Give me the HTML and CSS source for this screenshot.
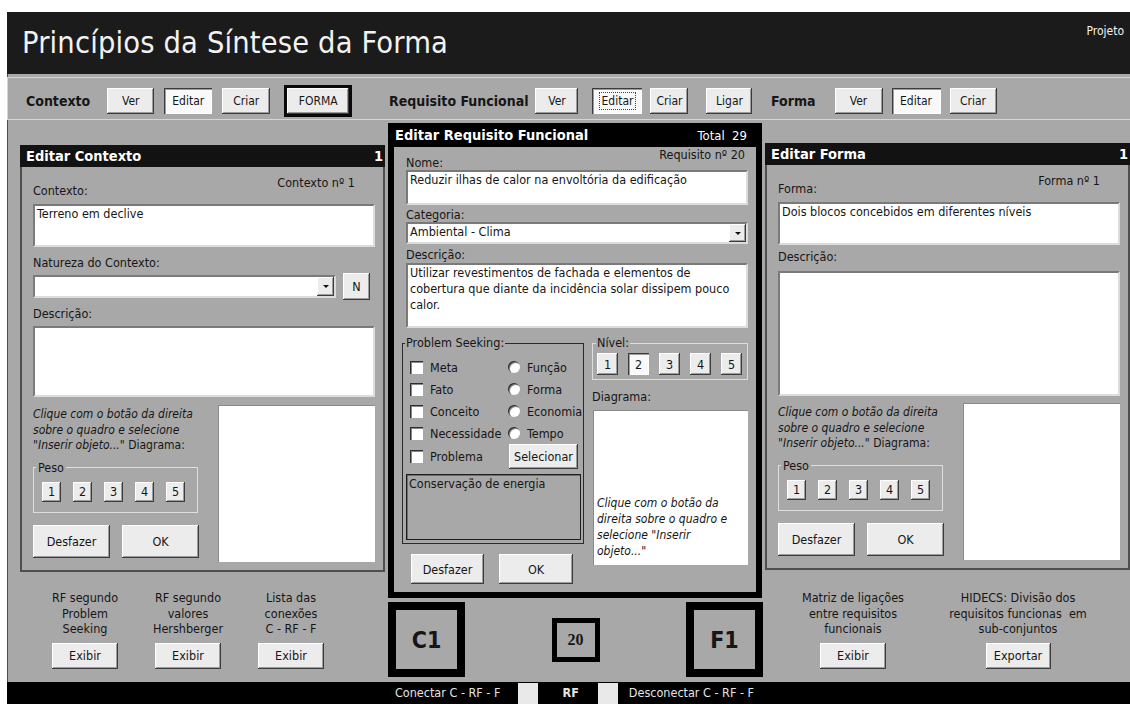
FILE: index.html
```html
<!DOCTYPE html>
<html lang="pt-BR">
<head>
<meta charset="utf-8">
<title>Princípios da Síntese da Forma</title>
<link rel="stylesheet" href="styles.css">
</head>
<body>
<div class="app">
  <header class="titlebar">
    <h1>Princípios da Síntese da Forma</h1>
    <span class="projeto">Projeto</span>
  </header>

  <div class="main">
    <nav class="toolbar">
      <div class="tb-group tb-ctx">
        <span class="tb-label">Contexto</span>
        <button class="btn tb-btn w47 ml17">Ver</button>
        <button class="btn tb-btn down w48 ml10">Editar</button>
        <button class="btn tb-btn w48 ml10">Criar</button>
        <span class="forma-ring ml14"><button class="btn tb-btn w62">FORMA</button></span>
      </div>
      <div class="tb-group tb-rf">
        <span class="tb-label">Requisito Funcional</span>
        <button class="btn tb-btn w43 ml7">Ver</button>
        <button class="btn tb-btn down w50 ml14"><span class="focus">Editar</span></button>
        <button class="btn tb-btn w38 ml8">Criar</button>
        <button class="btn tb-btn w46 ml18">Ligar</button>
      </div>
      <div class="tb-group tb-frm">
        <span class="tb-label">Forma</span>
        <button class="btn tb-btn w48 ml19">Ver</button>
        <button class="btn tb-btn down w49 ml9">Editar</button>
        <button class="btn tb-btn w47 ml9">Criar</button>
      </div>
    </nav>

    <div class="columns">
      <!-- Contexto -->
      <section class="col col-left">
        <div class="panel-side">
          <div class="panel-head"><span>Editar Contexto</span><span>1</span></div>
          <div class="panel-body">
            <div class="field-head">
              <span class="lbl">Contexto:</span>
              <span class="lbl counter">Contexto nº 1</span>
            </div>
            <div class="textbox tb-name">Terreno em declive</div>
            <div class="lbl gap8">Natureza do Contexto:</div>
            <div class="combo-row">
              <div class="combo combo-ctx"><span class="combo-val"></span><span class="drop"><i></i></span></div>
              <button class="btn btn-n">N</button>
            </div>
            <div class="lbl gap8">Descrição:</div>
            <div class="textbox tb-desc-ctx"></div>
            <div class="lower">
              <div class="lower-left">
                <p class="note">Clique com o botão da direita<br>sobre o quadro e selecione<br>"Inserir objeto..." <span class="plain">Diagrama:</span></p>
                <fieldset class="peso">
                  <legend>Peso</legend>
                  <div class="num-row">
                    <button class="btn num">1</button><button class="btn num">2</button><button class="btn num">3</button><button class="btn num">4</button><button class="btn num">5</button>
                  </div>
                </fieldset>
                <div class="actions">
                  <button class="btn act">Desfazer</button>
                  <button class="btn act">OK</button>
                </div>
              </div>
              <div class="diagram"></div>
            </div>
          </div>
        </div>
        <div class="links links-left">
          <div class="link"><p>RF segundo<br>Problem<br>Seeking</p><button class="btn go">Exibir</button></div>
          <div class="link"><p>RF segundo<br>valores<br>Hershberger</p><button class="btn go">Exibir</button></div>
          <div class="link"><p>Lista das<br>conexões<br>C - RF - F</p><button class="btn go">Exibir</button></div>
        </div>
      </section>

      <!-- Requisito Funcional -->
      <section class="col col-center">
        <div class="panel-center">
          <div class="center-head"><span>Editar Requisito Funcional</span><span class="total">Total&nbsp; 29</span></div>
          <div class="center-body">
            <div class="field-head rf-head fld">
              <span class="lbl">Nome:</span>
              <span class="lbl counter">Requisito nº 20</span>
            </div>
            <div class="textbox fld tb-rf-name">Reduzir ilhas de calor na envoltória da edificação</div>
            <div class="lbl lbl14 fld mt3">Categoria:</div>
            <div class="combo fld combo-cat"><span class="combo-val">Ambiental - Clima</span><span class="drop"><i></i></span></div>
            <div class="lbl lbl14 fld mt4">Descrição:</div>
            <div class="textbox fld tb-rf-desc">Utilizar revestimentos de fachada e elementos de cobertura que diante da incidência solar dissipem pouco calor.</div>

            <div class="rf-lower">
              <div class="rf-left">
                <fieldset class="seeking">
                  <legend>Problem Seeking:</legend>
                  <div class="opt-grid">
                    <label class="opt"><span class="chk"></span>Meta</label>
                    <label class="opt"><span class="rad"></span>Função</label>
                    <label class="opt"><span class="chk"></span>Fato</label>
                    <label class="opt"><span class="rad"></span>Forma</label>
                    <label class="opt"><span class="chk"></span>Conceito</label>
                    <label class="opt"><span class="rad"></span>Economia</label>
                    <label class="opt"><span class="chk"></span>Necessidade</label>
                    <label class="opt"><span class="rad"></span>Tempo</label>
                    <label class="opt opt-last"><span class="chk"></span>Problema</label>
                    <div class="opt opt-last"><button class="btn sel">Selecionar</button></div>
                  </div>
                  <div class="result">Conservação de energia</div>
                </fieldset>
                <div class="actions rf-actions">
                  <button class="btn act-rf w73">Desfazer</button>
                  <button class="btn act-rf w74">OK</button>
                </div>
              </div>
              <div class="rf-right">
                <fieldset class="nivel">
                  <legend>Nível:</legend>
                  <div class="num-row nivel-row">
                    <button class="btn num2">1</button><button class="btn num2 down">2</button><button class="btn num2">3</button><button class="btn num2">4</button><button class="btn num2">5</button>
                  </div>
                </fieldset>
                <div class="lbl lbl14 diag-lbl">Diagrama:</div>
                <div class="diagram rf-diagram"><p>Clique com o botão da direita sobre o quadro e selecione "Inserir objeto..."</p></div>
              </div>
            </div>
          </div>
        </div>
        <div class="chain">
          <div class="node">C1</div>
          <div class="node-mid">20</div>
          <div class="node">F1</div>
        </div>
      </section>

      <!-- Forma -->
      <section class="col col-right">
        <div class="panel-side">
          <div class="panel-head"><span>Editar Forma</span><span>1</span></div>
          <div class="panel-body">
            <div class="field-head">
              <span class="lbl">Forma:</span>
              <span class="lbl counter">Forma nº 1</span>
            </div>
            <div class="textbox tb-name">Dois blocos concebidos em diferentes níveis</div>
            <div class="lbl mt4">Descrição:</div>
            <div class="textbox tb-desc-frm"></div>
            <div class="lower lower-frm">
              <div class="lower-left">
                <p class="note">Clique com o botão da direita<br>sobre o quadro e selecione<br>"Inserir objeto..." <span class="plain">Diagrama:</span></p>
                <fieldset class="peso">
                  <legend>Peso</legend>
                  <div class="num-row">
                    <button class="btn num">1</button><button class="btn num">2</button><button class="btn num">3</button><button class="btn num">4</button><button class="btn num">5</button>
                  </div>
                </fieldset>
                <div class="actions">
                  <button class="btn act">Desfazer</button>
                  <button class="btn act">OK</button>
                </div>
              </div>
              <div class="diagram"></div>
            </div>
          </div>
        </div>
        <div class="links links-right">
          <div class="link"><p>Matriz de ligações<br>entre requisitos<br>funcionais</p><button class="btn go">Exibir</button></div>
          <div class="link"><p>HIDECS: Divisão dos<br>requisitos funcionas&nbsp; em<br>sub-conjuntos</p><button class="btn go w65">Exportar</button></div>
        </div>
      </section>
    </div>
  </div>

  <footer class="statusbar">
    <span class="sb-text">Conectar C - RF - F</span>
    <span class="sb-box box-a"></span>
    <span class="sb-text sb-rf">RF</span>
    <span class="sb-box box-b"></span>
    <span class="sb-text sb-dis">Desconectar C - RF - F</span>
  </footer>
</div>
</body>
</html>
```

FILE: styles.css
```css
* { box-sizing: border-box; }

body {
  margin: 0;
  background: #fff;
  font-family: "DejaVu Sans Condensed", "DejaVu Sans", sans-serif;
  font-size: 12.5px;
  color: #161616;
}

p { margin: 0; }

.app {
  margin: 12px 0 0 7px;
  width: 1123px;
  height: 692px;
  display: flex;
  flex-direction: column;
  overflow: hidden;
}

/* ---------- title bar ---------- */
.titlebar {
  height: 62px;
  flex: none;
  background: #1b1b1b;
  color: #f2f2f2;
  display: flex;
  justify-content: space-between;
  align-items: flex-start;
  padding: 0 6px 0 15px;
}
.titlebar h1 {
  margin: 13px 0 0;
  font-weight: normal;
  font-size: 30.5px;
  line-height: 36px;
  letter-spacing: 0.15px;
}
.projeto { margin-top: 12px; font-size: 12px; line-height: 15px; }

/* ---------- main gray area ---------- */
.main {
  flex: 1;
  background: #a8a8a8;
  box-shadow: inset 1px 0 #4d4d4d;
  display: flex;
  flex-direction: column;
}

/* ---------- buttons ---------- */
.btn {
  font: inherit;
  color: #161616;
  background: #ececec;
  border: none;
  padding: 0;
  margin: 0;
  display: inline-flex;
  align-items: center;
  justify-content: center;
  box-shadow: inset -1px -1px #3c3c3c, inset 1px 1px #ffffff, inset -2px -2px #9c9c9c;
}
.btn.down {
  background: #f9f9f9;
  box-shadow: inset 1px 1px #3c3c3c, inset 2px 2px #9c9c9c, inset -1px -1px #ffffff;
}
.btn .focus { outline: 1px dotted #444; outline-offset: 1px; padding: 0 1px; }

/* ---------- toolbar ---------- */
.toolbar {
  margin-top: 3px;
  height: 43px;
  flex: none;
  border-top: 1px solid #d6d6d6;
  border-bottom: 1px solid #d6d6d6;
  box-shadow: inset 1px 0 #d6d6d6;
  display: grid;
  grid-template-columns: 381px 375px 367px;
  align-items: center;
  padding-top: 4px;
}
.tb-group { display: flex; align-items: center; }
.tb-ctx { padding-left: 19px; }
.tb-rf { padding-left: 1px; }
.tb-frm { padding-left: 8px; }
.tb-label { font-weight: bold; font-size: 14px; }
.tb-btn { height: 26px; font-size: 12px; }
.forma-ring { display: inline-flex; border: 3px solid #0a0a0a; }

.w38 { width: 38px; } .w43 { width: 43px; } .w46 { width: 46px; } .w47 { width: 47px; }
.w48 { width: 48px; } .w49 { width: 49px; } .w50 { width: 50px; } .w62 { width: 62px; }
.w65 { width: 65px; } .w73 { width: 73px; } .w74 { width: 74px; }
.ml7 { margin-left: 7px; } .ml8 { margin-left: 8px; } .ml9 { margin-left: 9px; }
.ml10 { margin-left: 10px; } .ml14 { margin-left: 14px; } .ml17 { margin-left: 17px; }
.ml18 { margin-left: 18px; } .ml19 { margin-left: 19px; }

/* ---------- columns ---------- */
.columns {
  flex: 1;
  display: grid;
  grid-template-columns: 381px 375px 367px;
}
.col { display: flex; flex-direction: column; }

/* ---------- side panels (Contexto / Forma) ---------- */
.panel-side {
  width: 365px;
  height: 427px;
  display: flex;
  flex-direction: column;
}
.col-left .panel-side { margin: 25px 0 0 13px; }
.col-right .panel-side { margin: 23px 0 0 2px; }

.panel-head {
  height: 22px;
  flex: none;
  background: #121212;
  color: #fff;
  display: flex;
  justify-content: space-between;
  align-items: center;
  padding: 0 2px 0 6px;
  font-weight: bold;
  font-size: 14.5px;
}
.panel-body {
  flex: 1;
  border: 2px solid #4f4f4f;
  border-top: 0;
  padding: 6px 8px 0 11px;
}

.lbl { line-height: 15px; }
.lbl14 { line-height: 14px; }
.gap8 { margin-top: 8px; }
.mt3 { margin-top: 3px; }
.mt4 { margin-top: 4px; }

.field-head {
  height: 25px;
  display: flex;
  justify-content: space-between;
  align-items: flex-end;
}
.field-head .counter { align-self: flex-start; margin-top: 2px; padding-right: 20px; }

.textbox {
  background: #fff;
  border: 2px solid;
  border-color: #7a7a7a #dcdcdc #dcdcdc #7a7a7a;
  padding: 0 2px;
  line-height: 15px;
}
.tb-name { height: 43px; margin-top: 6px; }
.tb-desc-ctx { height: 71px; margin-top: 5px; }
.tb-desc-frm { height: 125px; margin-top: 7px; }

.combo-row { display: flex; align-items: center; margin-top: 5px; height: 23px; }
.combo {
  display: flex;
  align-items: stretch;
  background: #fff;
  border: 2px solid;
  border-color: #7a7a7a #dcdcdc #dcdcdc #7a7a7a;
}
.combo-ctx { width: 303px; height: 23px; }
.combo-val { flex: 1; padding: 0 2px; line-height: 17px; }
.drop {
  width: 17px;
  background: #ececec;
  display: flex;
  align-items: center;
  justify-content: center;
  box-shadow: inset -1px -1px #3c3c3c, inset 1px 1px #ffffff, inset -2px -2px #9c9c9c;
}
.drop i {
  display: block;
  border-left: 3px solid transparent;
  border-right: 3px solid transparent;
  border-top: 3px solid #111;
}
.btn-n { width: 27px; height: 27px; margin-left: 7px; }

.lower {
  margin-top: 8px;
  display: grid;
  grid-template-columns: 170px 157px;
  column-gap: 15px;
}
.lower-frm { margin-top: 7px; }
.lower-left { display: flex; flex-direction: column; }
.note { margin-top: 2px; font-style: italic; line-height: 15.5px; white-space: nowrap; font-size: 12px; }
.note .plain { font-style: normal; }
.diagram {
  height: 157px;
  background: #fff;
  border-top: 1px solid #8a8a8a;
  border-left: 1px solid #8a8a8a;
}

fieldset { margin: 0; min-inline-size: 0; }
legend { padding: 0 2px; line-height: 14px; }

.peso {
  width: 165px;
  margin-top: 7px;
  border: 1px solid #dedede;
  padding: 7px 0 10px 8px;
}
.peso legend { margin-left: -6px; }
.num-row { display: flex; gap: 12px; }
.num { width: 19px; height: 20px; }

.actions { display: flex; gap: 12px; margin-top: 12px; }
.act { width: 77px; height: 33px; }

/* ---------- links below the side panels ---------- */
.links { display: grid; text-align: center; }
.links p { line-height: 15.5px; }
.links .go { width: 66px; height: 26px; margin-top: 6px; }
.links .go.w65 { width: 65px; }
.links-left {
  margin-top: 18px;
  padding-left: 28px;
  grid-template-columns: 100px 100px 100px;
  column-gap: 3px;
}
.links-right {
  margin-top: 20px;
  padding-left: 25px;
  grid-template-columns: 130px 170px;
  column-gap: 15px;
}
.link { display: flex; flex-direction: column; align-items: center; white-space: nowrap; }

/* ---------- center panel (Requisito Funcional) ---------- */
.panel-center {
  margin-top: 3px;
  width: 374px;
  height: 475px;
  background: #000;
  padding: 0 6px 6px;
  display: flex;
  flex-direction: column;
}
.center-head {
  height: 24px;
  flex: none;
  color: #fff;
  display: flex;
  justify-content: space-between;
  align-items: center;
  padding: 0 9px 0 1px;
  font-weight: bold;
  font-size: 14.5px;
}
.center-head .total { font-weight: normal; font-size: 13px; }
.center-body {
  flex: 1;
  background: #a8a8a8;
  padding: 1px 8px 0 8px;
}
.fld { margin-left: 4px; }
.rf-head { height: 22px; }
.rf-head .lbl { line-height: 14px; }
.rf-head .counter { margin-top: 0; padding-right: 3px; }
.tb-rf-name { height: 35px; }
.combo-cat { height: 22px; }
.combo-cat .combo-val { line-height: 16px; }
.tb-rf-desc { height: 65px; margin-top: 1px; line-height: 16px; }

.rf-lower {
  margin-top: 8px;
  display: grid;
  grid-template-columns: 182px 156px;
  column-gap: 8px;
}
.seeking {
  border: 1px solid #2b2b2b;
  padding: 6px 2px 3px 7px;
}
.seeking legend { margin-left: -5px; padding: 0 1px; }
.opt-grid {
  display: grid;
  grid-template-columns: 98px 1fr;
  grid-auto-rows: 22px;
}
.opt-grid .opt-last { height: 25px; }
.opt { display: flex; align-items: center; gap: 7px; white-space: nowrap; }
.chk {
  width: 13px;
  height: 13px;
  flex: none;
  background: #fff;
  box-shadow: inset 1px 1px #2e2e2e, inset 2px 2px #8a8a8a;
}
.rad {
  width: 12px;
  height: 12px;
  flex: none;
  border-radius: 50%;
  background: #fff;
  box-shadow: inset 1px 1px #2e2e2e, inset 2px 2px #8a8a8a;
}
.sel { width: 69px; height: 25px; margin-left: 1px; }
.result {
  margin: 8px 0 0 -4px;
  height: 66px;
  border: 1px solid #1e1e1e;
  box-shadow: inset 1px 1px #6e6e6e;
  padding: 1px 2px;
  line-height: 16px;
}
.rf-actions { gap: 15px; margin: 10px 0 0 9px; }
.act-rf { height: 30px; }

.nivel {
  border: 1px solid #dedede;
  padding: 3px 0 4px 4px;
}
.nivel legend { margin-left: -1px; padding: 0 1px; }
.nivel-row { gap: 10px; }
.num2 { width: 21px; height: 22px; }
.diag-lbl { margin-top: 10px; }
.rf-diagram {
  margin: 6px 0 0 1px;
  height: 155px;
  display: flex;
  flex-direction: column;
  justify-content: flex-end;
  padding: 0 8px 6px 3px;
}
.rf-diagram p { font-style: italic; line-height: 16px; font-size: 12px; }

/* ---------- C - RF - F chain ---------- */
.chain {
  margin-top: 4px;
  height: 75px;
  display: flex;
  justify-content: space-between;
  align-items: center;
}
.node {
  width: 77px;
  height: 75px;
  border: 8px solid #000;
  display: flex;
  align-items: center;
  justify-content: center;
  font-weight: bold;
  font-size: 23px;
}
.node-mid {
  width: 48px;
  height: 44px;
  border: 5px solid #000;
  display: flex;
  align-items: center;
  justify-content: center;
  font-family: "Liberation Serif", serif;
  font-weight: bold;
  font-size: 16px;
}

/* ---------- bottom status bar ---------- */
.statusbar {
  height: 22px;
  flex: none;
  background: #000;
  color: #e4e4e4;
  display: flex;
  align-items: stretch;
  padding-left: 388px;
}
.sb-text { line-height: 22px; white-space: nowrap; }
.sb-box { width: 20px; margin-top: 1px; background: #e9e9e9; }
.box-a { margin-left: 18px; }
.sb-rf { font-weight: bold; margin-left: 24px; }
.box-b { margin-left: 19px; }
.sb-dis { margin-left: 11px; }
```
